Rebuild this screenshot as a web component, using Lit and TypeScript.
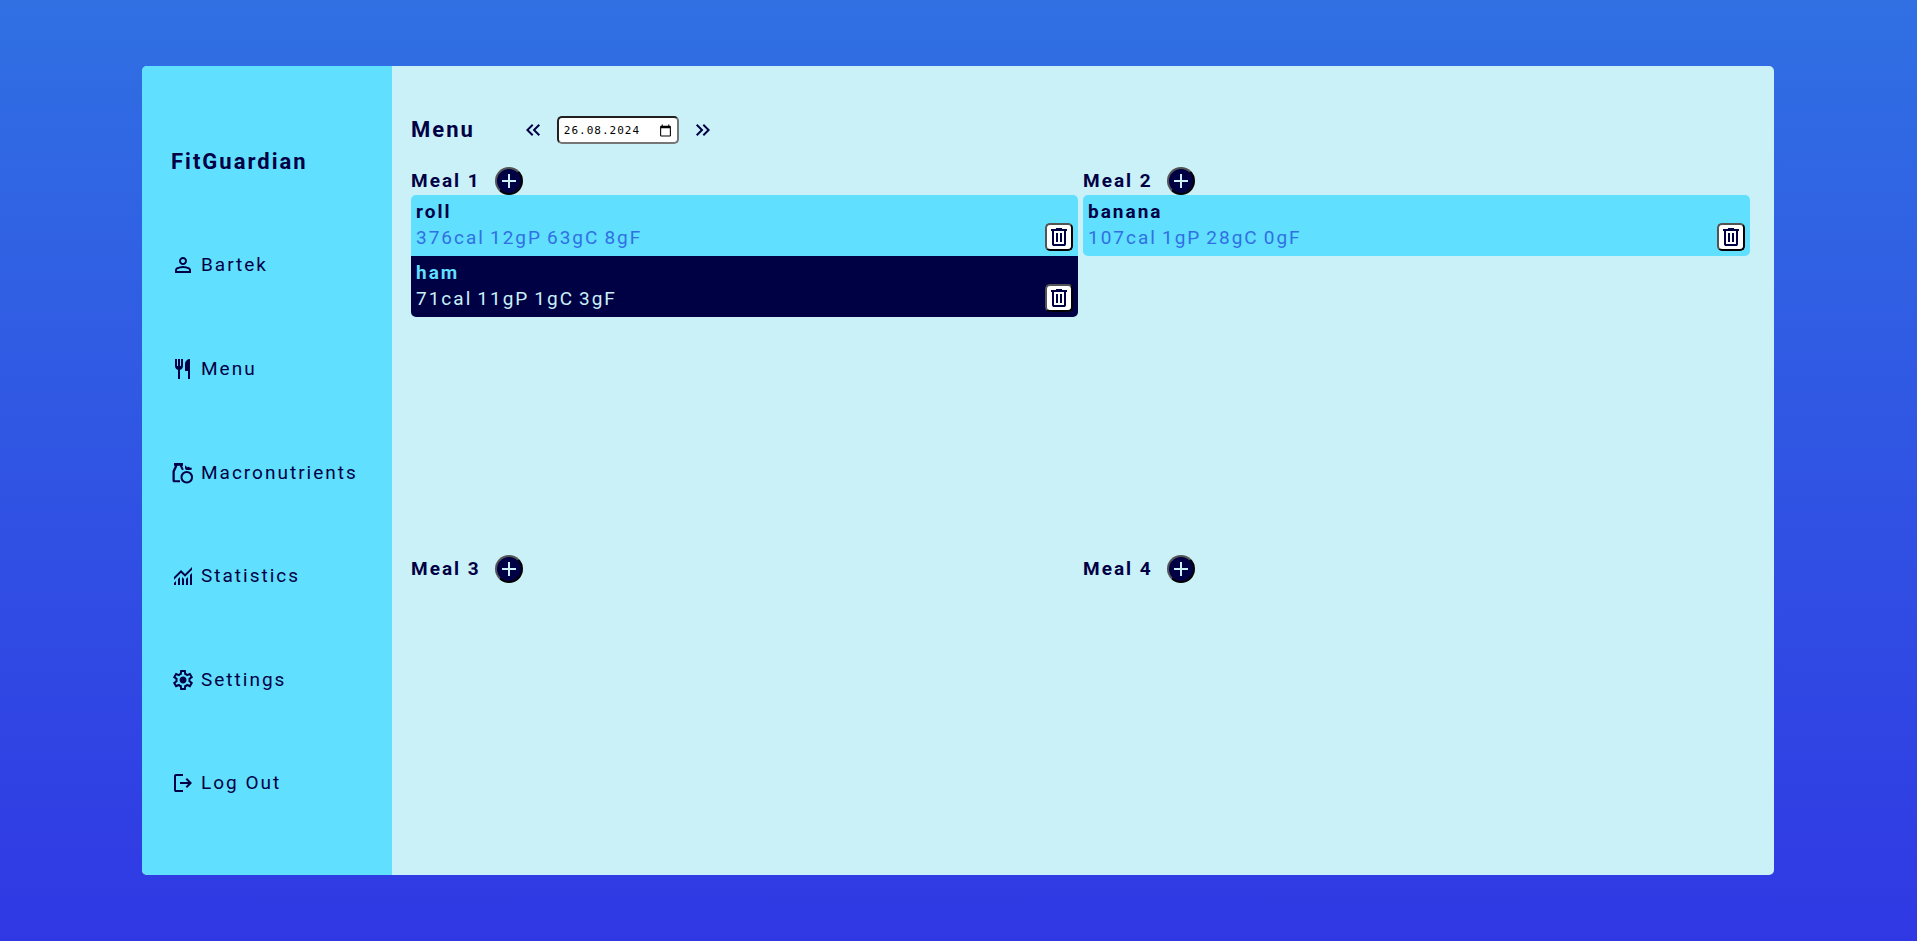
import { LitElement, html, css, svg } from "lit";
import { customElement, property, state } from "lit/decorators.js";

const ICONS: Record<string, string> = {
  person:
    "M480-480q-66 0-113-47t-47-113q0-66 47-113t113-47q66 0 113 47t47 113q0 66-47 113t-113 47ZM160-160v-112q0-34 17.500-62.500T224-378q62-31 126-46.500T480-440q66 0 130 15.500T736-378q29 15 46.500 43.500T800-272v112H160Zm80-80h480v-32q0-11-5.500-20T700-306q-54-27-109-40.500T480-360q-56 0-111 13.500T260-306q-9 5-14.500 14t-5.500 20v32Zm240-320q33 0 56.500-23.500T560-640q0-33-23.500-56.500T480-720q-33 0-56.500 23.500T400-640q0 33 23.500 56.500T480-560Z",
  restaurant:
    "M280-80v-366q-51-14-85.500-56T160-600v-280h80v280h40v-280h80v280h40v-280h80v280q0 56-34.500 98T360-446v366h-80Zm400 0v-320H560v-280q0-83 58.500-141.500T760-880v800h-80Z",
  nutrition:
    "M120-880h360v110h-40l70 150-72 32-88-182h-90l-110 240v330q0 10 10 10h200v80H130q-30 0-50-20t-20-50v-360q0-15 6-28l94-202h-40v-110ZM630-60q-105 0-178-73t-73-178q0-105 73-178t178-73q105 0 178 73t73 178q0 105-73 178T630-60Zm0-80q71 0 121-50t50-121q0-71-50-121t-121-50q-71 0-121 50t-50 121q0 71 50 121t121 50Zm-10-460q-60-20-60-90v-80h40q25 25 30 72 35-32 80-32 30 40 80 44h40v70q-30 16-80 16H620Z",
  monitoring:
    "M120-120v-80l80-80v160h-80Zm160 0v-240l80-80v320h-80Zm160 0v-320l80 81v239h-80Zm160 0v-239l80-80v319h-80Zm160 0v-400l80-80v480h-80ZM120-327v-113l280-280 160 160 280-280v113L560-447 400-607 120-327Z",
  settings:
    "m370-80-16-128q-13-5-24.500-12T307-235l-119 50L78-375l103-78q-1-7-1-13.500v-27q0-6.500 1-13.500L78-585l110-190 119 50q11-8 23-15t24-12l16-128h220l16 128q13 5 24.500 12t22.500 15l119-50 110 190-103 78q1 7 1 13.500v27q0 6.500-2 13.500l103 78-110 190-118-50q-11 8-23 15t-24 12L590-80H370Zm70-80h79l14-106q31-8 57.500-23.500T639-327l99 41 39-68-86-65q5-14 7-29.500t2-31.500q0-16-2-31.500t-7-29.500l86-65-39-68-99 42q-22-23-48.500-38.500T533-694l-13-106h-79l-14 106q-31 8-57.500 23.500T321-633l-99-41-39 68 86 64q-5 15-7 30t-2 32q0 16 2 31t7 30l-86 65 39 68 99-42q22 23 48.500 38.500T427-266l13 106Zm42-180q58 0 99-41t41-99q0-58-41-99t-99-41q-59 0-99.500 41T342-480q0 58 40.500 99t99.500 41Z",
  logout:
    "M200-120q-33 0-56.500-23.500T120-200v-560q0-33 23.500-56.500T200-840h280v80H200v560h280v80H200Zm440-160-55-58 102-102H360v-80h327L585-622l55-58 200 200-200 200Z",
  back: "M440-240 200-480l240-240 56 56-183 184 183 184-56 56Zm264 0L464-480l240-240 56 56-183 184 183 184-56 56Z",
  forward: "M383-480 200-664l56-56 240 240-240 240-56-56 183-184Zm264 0L464-664l56-56 240 240-240 240-56-56 183-184Z",
  calendar:
    "M800-840h-40v-80h-80v80H280v-80h-80v80h-40q-80 0-80 80v640q0 80 80 80h640q80 0 80-80v-640q0-80-80-80Zm0 720H160v-520h640v520Z",
  add: "M440-440H200v-80h240v-240h80v240h240v80H520v240h-80v-240Z",
  trash:
    "M280-120q-33 0-56.500-23.500T200-200v-520h-40v-80h200v-40h240v40h200v80h-40v520q0 33-23.500 56.500T680-120H280Zm400-600H280v520h400v-520ZM360-280h80v-360h-80v360Zm160 0h80v-360h-80v360Z",
};

const icon = (name: string, size: number) => html`<svg
  width=${size} height=${size} viewBox="0 -960 960 960" fill="currentColor" aria-hidden="true"
>${svg`<path d=${ICONS[name]}></path>`}</svg>`;

interface Product {
  name: string;
  cal: number;
  protein: number;
  carbs: number;
  fat: number;
}

@customElement("meal-section")
export class MealSection extends LitElement {
  @property() label = "";
  @property({ attribute: false }) products: Product[] = [];

  static styles = css`
    :host { display: block; min-width: 0; }
    header { display: flex; align-items: center; gap: 14px; height: 28px; }
    h2 { margin: 0; font-size: 19px; line-height: 28px; font-weight: 700; }
    svg { display: block; flex: none; }
    button {
      display: flex; align-items: center; justify-content: center;
      box-sizing: border-box; width: 28px; height: 28px; padding: 0;
      border: 2px outset #000; cursor: pointer;
    }
    .add { border-radius: 50%; background: #000045; color: #caf0f8; }
    .remove { border-radius: 5px; background: #fff; color: #000045; }
    ul { list-style: none; margin: 0; padding: 0; border-radius: 5px; overflow: hidden; }
    li {
      display: flex; align-items: flex-end; justify-content: space-between;
      box-sizing: border-box; padding: 5px;
      background: #60dfff; color: #000045;
    }
    li:nth-child(even) { background: #000045; color: #60dfff; }
    .name { font-weight: 700; line-height: 24px; }
    .macros { display: flex; gap: 5px; color: #3070e3; line-height: 27px; }
    li:nth-child(even) .macros { color: #caf0f8; }
  `;

  render() {
    return html`
      <header>
        <h2>${this.label}</h2>
        <button class="add" aria-label="Add product to ${this.label}">${icon("add", 24)}</button>
      </header>
      <ul>
        ${this.products.map(
          (p) => html`<li>
            <div>
              <div class="name">${p.name}</div>
              <div class="macros">
                <span>${p.cal}cal</span><span>${p.protein}gP</span><span>${p.carbs}gC</span><span>${p.fat}gF</span>
              </div>
            </div>
            <button class="remove" aria-label="Remove ${p.name}">${icon("trash", 24)}</button>
          </li>`
        )}
      </ul>
    `;
  }
}

@customElement("app-root")
export class AppRoot extends LitElement {
  @state() private date = "26.08.2024";

  private links = [
    ["person", "Bartek"],
    ["restaurant", "Menu"],
    ["nutrition", "Macronutrients"],
    ["monitoring", "Statistics"],
    ["settings", "Settings"],
    ["logout", "Log Out"],
  ];

  private meals: { label: string; products: Product[] }[] = [
    {
      label: "Meal 1",
      products: [
        { name: "roll", cal: 376, protein: 12, carbs: 63, fat: 8 },
        { name: "ham", cal: 71, protein: 11, carbs: 1, fat: 3 },
      ],
    },
    { label: "Meal 2", products: [{ name: "banana", cal: 107, protein: 1, carbs: 28, fat: 0 }] },
    { label: "Meal 3", products: [] },
    { label: "Meal 4", products: [] },
  ];

  static styles = css`
    :host {
      display: flex; box-sizing: border-box; min-height: 100vh;
      padding: 66px 143px 66px 142px;
      background: linear-gradient(#3070e3, #3038e4);
      color: #000045;
      font: 19px/24px Roboto, sans-serif;
      letter-spacing: 2px;
    }
    .card { flex: 1; display: flex; border-radius: 5px; overflow: hidden; background: #caf0f8; }
    nav {
      flex: none; box-sizing: border-box; width: 250px; padding: 4px 29px 0;
      display: flex; flex-direction: column; justify-content: space-evenly;
      background: #60dfff;
    }
    h1 { margin: 0; font-size: 22px; line-height: 24px; font-weight: 700; }
    svg { display: block; flex: none; }
    a { display: flex; align-items: center; gap: 6px; color: inherit; text-decoration: none; }
    main { flex: 1; min-width: 0; display: flex; flex-direction: column; padding: 50px 24px 0 19px; }
    .top { display: flex; align-items: center; height: 28px; }
    .top h1 { margin-right: 46px; }
    .top button { display: flex; padding: 0; border: 0; background: none; color: inherit; cursor: pointer; }
    .date {
      display: flex; align-items: center; box-sizing: border-box; width: 122px; height: 28px;
      margin: 0 12px; padding: 0 5px; border: 2px inset #767676; border-radius: 5px; background: #fff;
      color: #000;
    }
    .date input {
      flex: 1; min-width: 0; padding: 0; border: 0; outline: 0; background: none; color: #000;
      font: 11px "DejaVu Sans Mono", monospace; letter-spacing: 1px;
    }
    .meals { flex: 1; display: grid; grid-template: 17fr 14fr / 1fr 1fr; column-gap: 5px; margin-top: 23px; }
  `;

  render() {
    return html`
      <div class="card">
        <nav>
          <h1>FitGuardian</h1>
          ${this.links.map(([name, label]) => html`<a href="#${name}">${icon(name, 24)}<span>${label}</span></a>`)}
        </nav>
        <main>
          <div class="top">
            <h1>Menu</h1>
            <button aria-label="Previous day">${icon("back", 24)}</button>
            <div class="date">
              <input aria-label="Date" .value=${this.date} />
              <button aria-label="Open calendar">${icon("calendar", 13)}</button>
            </div>
            <button aria-label="Next day">${icon("forward", 24)}</button>
          </div>
          <div class="meals">
            ${this.meals.map((m) => html`<meal-section .label=${m.label} .products=${m.products}></meal-section>`)}
          </div>
        </main>
      </div>
    `;
  }
}
